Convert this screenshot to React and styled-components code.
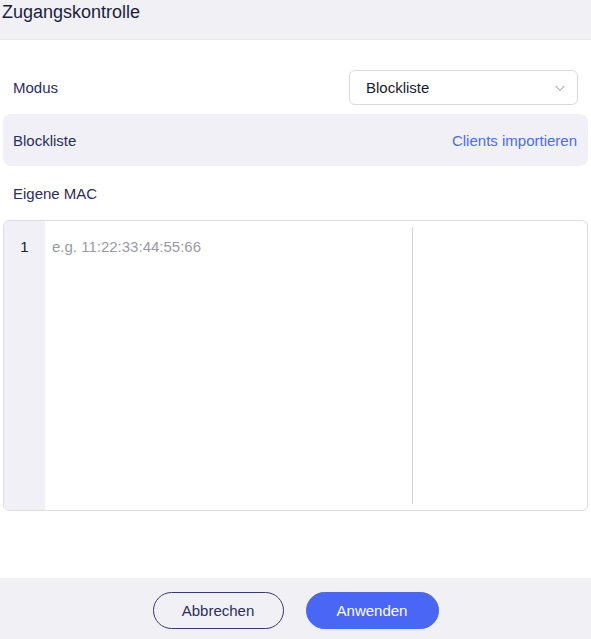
import React from 'react'
import styled, { createGlobalStyle } from 'styled-components'

const GlobalStyle = createGlobalStyle`
  html, body {
    margin: 0;
    padding: 0;
    background: #ffffff;
  }
  body {
    font-family: 'Liberation Sans', Arial, sans-serif;
    color: #2d2d5c;
  }
`

const StyledDialog = styled.div`
  width: 591px;
  height: 639px;
  display: flex;
  flex-direction: column;
  background: #fff;
  overflow: hidden;
`
const StyledHeader = styled.div`
  height: 40px;
  padding: 0 0 0 2px;
  background: #f0f0f5;
  border-bottom: 1px solid #e8e8ef;
  box-sizing: border-box;
`
const StyledTitle = styled.h2`
  margin: 0;
  font-size: 18px;
  font-weight: normal;
  line-height: 24px;
  color: #1e1e3a;
`
const StyledBody = styled.div`
  flex: 1;
  display: flex;
  flex-direction: column;
  padding: 30px 3px 0;
`
const StyledRow = styled.div`
  display: flex;
  align-items: center;
  justify-content: space-between;
  height: ${({ $height }) => $height}px;
  margin-top: ${({ $gap = 0 }) => $gap}px;
  padding: 0 11px 0 10px;
  border-radius: 8px;
  background: ${({ $shaded }) => ($shaded ? '#f0f0f6' : 'transparent')};
  box-sizing: border-box;
`
const StyledLabel = styled.span`
  font-size: 15px;
  color: #2d2d5c;
`
const StyledLink = styled.a`
  font-size: 15px;
  color: #4a6cf7;
  cursor: pointer;
`
const StyledSelect = styled.div`
  width: 229px;
  height: 35px;
  margin-right: -1px;
  display: flex;
  align-items: center;
  justify-content: space-between;
  padding: 0 10px 0 16px;
  box-sizing: border-box;
  border: 1px solid #d9d9e0;
  border-radius: 6px;
  background: #fff;
  font-size: 15px;
  color: #1a1a2e;
`
const StyledEditor = styled.div`
  height: 291px;
  display: flex;
  border: 1px solid #dcdce3;
  border-radius: 6px;
  overflow: hidden;
  box-sizing: border-box;
`
const StyledGutter = styled.div`
  width: 41px;
  background: #f0f0f6;
  padding-top: 17px;
  box-sizing: border-box;
  text-align: center;
  font-size: 15px;
  color: #1a1a2e;
`
const StyledArea = styled.div`
  flex: 1;
  display: flex;
  padding: 6px 0 6px 7px;
`
const StyledText = styled.div`
  width: 360px;
  padding-top: 11px;
  font-size: 15px;
  color: #9a9aa3;
  border-right: 1px solid #d2d2d8;
`
const StyledFooter = styled.div`
  height: 61px;
  display: flex;
  justify-content: center;
  align-items: flex-start;
  gap: 22px;
  padding-top: 14px;
  box-sizing: border-box;
  background: #f0f0f5;
`
const StyledButton = styled.button`
  width: ${({ $width }) => $width}px;
  height: 37px;
  border-radius: 19px;
  font-family: inherit;
  font-size: 15px;
  cursor: pointer;
  border: 1.5px solid ${({ $primary }) => ($primary ? '#4a66f5' : '#3b3b6b')};
  background: ${({ $primary }) => ($primary ? '#4a66f5' : 'transparent')};
  color: ${({ $primary }) => ($primary ? '#fff' : '#2d2d5c')};
`

const Chevron = () => (
  <svg width="14" height="14" viewBox="0 0 14 14" fill="none">
    <path d="M2.5 5l4.5 4.5L11.5 5" stroke="#b8b8c2" strokeWidth="1.2" />
  </svg>
)

const App = () => (
  <StyledDialog>
    <GlobalStyle />
    <StyledHeader>
      <StyledTitle>Zugangskontrolle</StyledTitle>
    </StyledHeader>
    <StyledBody>
      <StyledRow $height={35}>
        <StyledLabel>Modus</StyledLabel>
        <StyledSelect>
          Blockliste
          <Chevron />
        </StyledSelect>
      </StyledRow>
      <StyledRow $height={52} $gap={9} $shaded>
        <StyledLabel>Blockliste</StyledLabel>
        <StyledLink>Clients importieren</StyledLink>
      </StyledRow>
      <StyledRow $height={54}>
        <StyledLabel>Eigene MAC</StyledLabel>
      </StyledRow>
      <StyledEditor>
        <StyledGutter>1</StyledGutter>
        <StyledArea>
          <StyledText>e.g. 11:22:33:44:55:66</StyledText>
        </StyledArea>
      </StyledEditor>
    </StyledBody>
    <StyledFooter>
      <StyledButton $width={131}>Abbrechen</StyledButton>
      <StyledButton $width={133} $primary>
        Anwenden
      </StyledButton>
    </StyledFooter>
  </StyledDialog>
)

export default App
